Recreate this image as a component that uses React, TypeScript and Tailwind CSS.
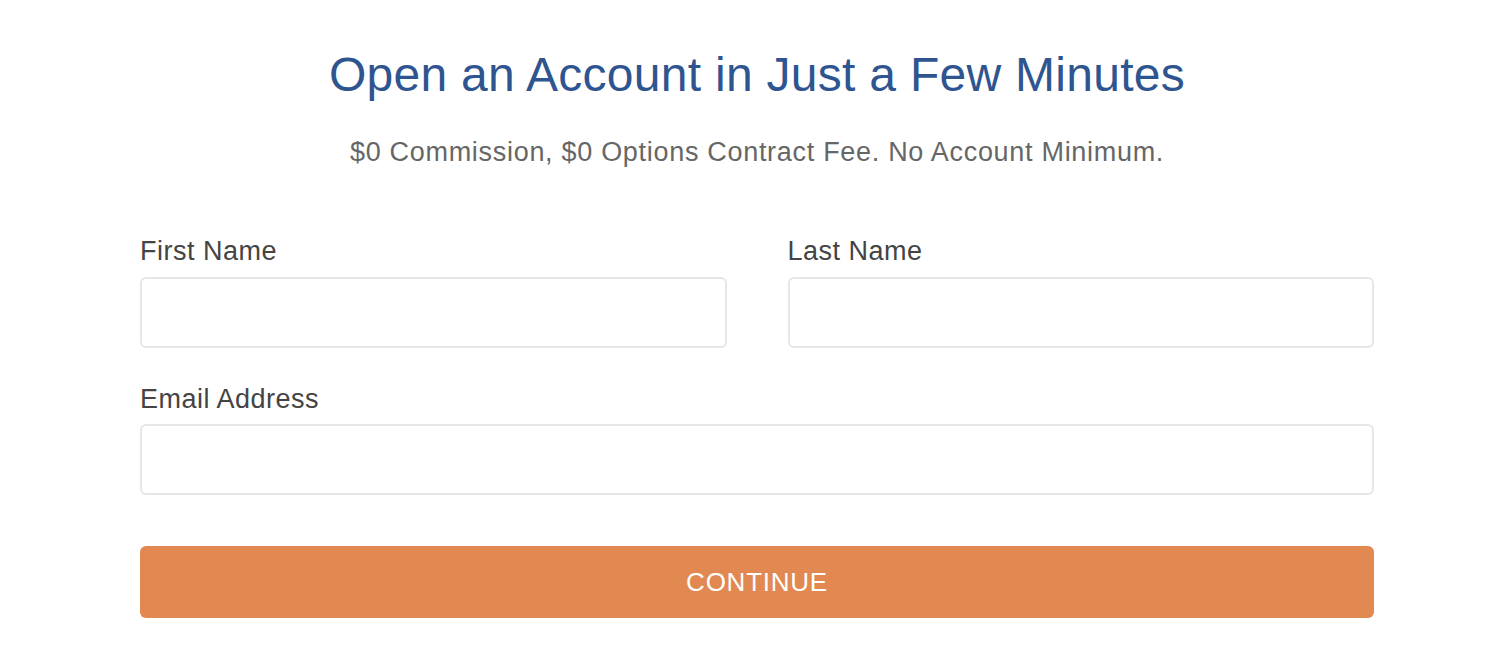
import React from "react";

export default function App() {
  return (
    <div className="w-[1502px] h-[652px] bg-white font-['Liberation_Sans',Arial,sans-serif]">
      <div className="ml-[140px] w-[1234px] pt-[51px]">
        <h1 className="text-center text-[48px] leading-[48px] tracking-[0.28px] text-[#2f5590] font-normal">
          Open an Account in Just a Few Minutes
        </h1>
        <p className="mt-[40px] text-center text-[27px] leading-[27px] tracking-[0.7px] text-[#666666]">
          $0 Commission, $0 Options Contract Fee. No Account Minimum.
        </p>
        <div className="mt-[72px] grid grid-cols-2 gap-x-[61px]">
          <div className="flex flex-col gap-[12px]">
            <label className="text-[27px] leading-[27px] tracking-[0.5px] text-[#444444]">First Name</label>
            <input className="h-[71px] rounded-[6px] border-2 border-[#e6e6e6] bg-white outline-none" />
          </div>
          <div className="flex flex-col gap-[12px]">
            <label className="text-[27px] leading-[27px] tracking-[0.5px] text-[#444444]">Last Name</label>
            <input className="h-[71px] rounded-[6px] border-2 border-[#e6e6e6] bg-white outline-none" />
          </div>
        </div>
        <div className="mt-[38px] flex flex-col gap-[11px]">
          <label className="text-[27px] leading-[27px] tracking-[0.5px] text-[#444444]">Email Address</label>
          <input className="h-[71px] rounded-[6px] border-2 border-[#e6e6e6] bg-white outline-none" />
        </div>
        <button className="mt-[51px] flex h-[72px] w-full items-center justify-center rounded-[6px] bg-[#e28851] text-[26px] tracking-[0.75px] text-white">
          CONTINUE
        </button>
      </div>
    </div>
  );
}
